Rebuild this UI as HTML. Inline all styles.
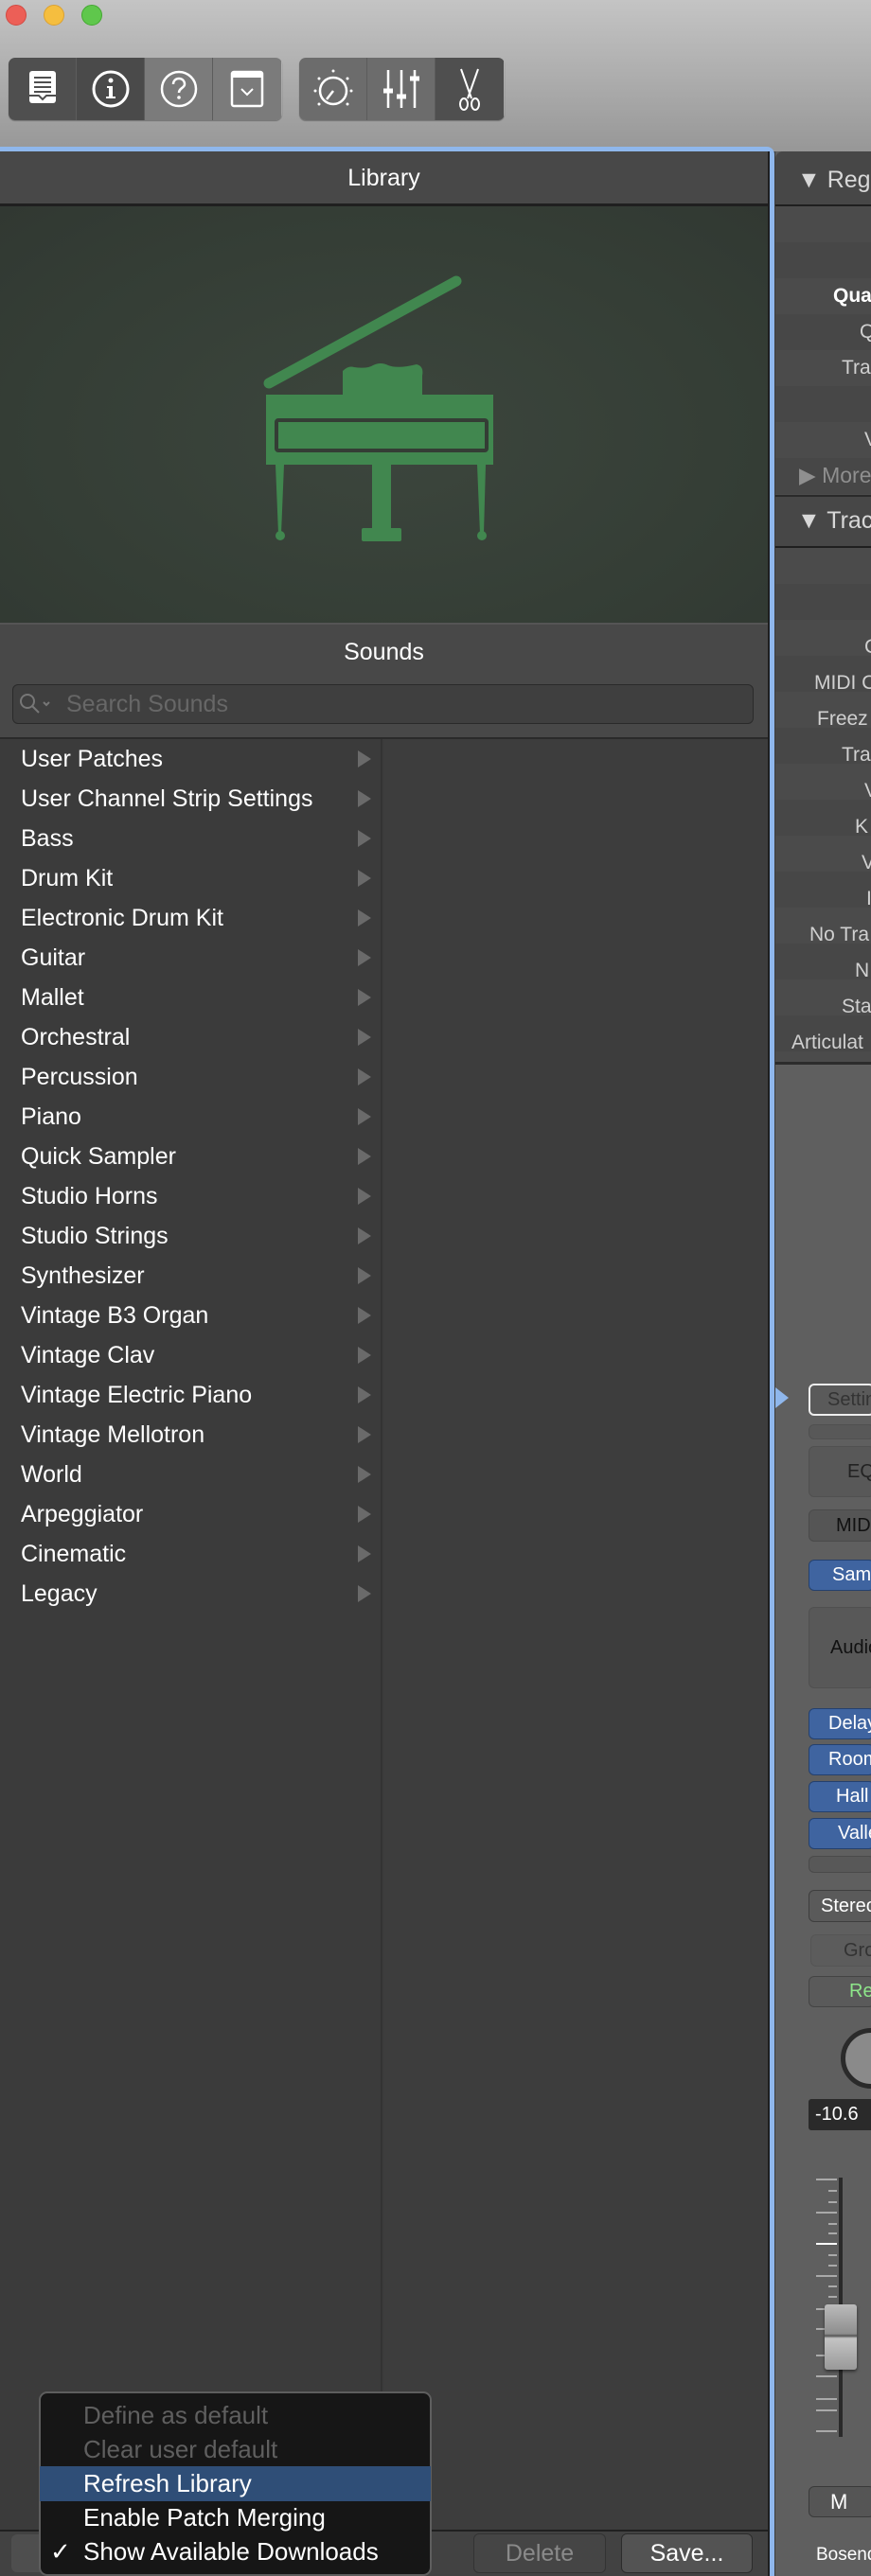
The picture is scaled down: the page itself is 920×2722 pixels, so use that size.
<!DOCTYPE html>
<html><head><meta charset="utf-8"><style>
*{margin:0;padding:0;box-sizing:border-box}
body{width:920px;height:2722px;overflow:hidden;position:relative;background:#3c3c3c;font-family:"Liberation Sans",sans-serif}
.a{position:absolute}
.top{left:0;top:0;width:920px;height:160px;background:linear-gradient(#c4c4c4,#a9a9a9 60%,#979797)}
.tl{width:22px;height:22px;border-radius:50%;top:5px}
.tb{top:61px;height:66px;border-radius:7px;overflow:hidden;display:flex;box-shadow:0 1px 1px rgba(0,0,0,.3)}
.tb div{width:72px;height:66px;border-right:1px solid #5c5c5c;display:flex;align-items:center;justify-content:center}
.row{left:0;width:404px;height:42px;color:#fff;font-size:25px;line-height:42px;padding-left:22px}
.arr{left:378px;width:0;height:0;border-top:9px solid transparent;border-bottom:9px solid transparent;border-left:14px solid #6a6a6a}
.rr{left:819px;width:101px;height:38px;color:#d0d0d0;font-size:21px;line-height:38px;white-space:nowrap;overflow:hidden}
.btn{left:854px;width:70px;border-radius:6px;font-size:20px;text-align:left;padding-left:18px;white-space:nowrap;overflow:hidden}
.blue{background:#3f64a0;border:1px solid #24406e;color:#fff}
.mi{left:42px;width:413px;height:36px;font-size:26px;line-height:36px;padding-left:46px;color:#fff}
</style></head><body>
<div class="a top"></div>
<div class="a tl" style="left:6px;background:#ec5f57;border:1px solid #d24a42"></div>
<div class="a tl" style="left:46px;background:#f5be3f;border:1px solid #dba130"></div>
<div class="a tl" style="left:86px;background:#5fc74c;border:1px solid #44a832"></div>

<div class="a tb" style="left:9px;width:289px">
 <div style="background:#4f4f4f"><svg width="40" height="46" viewBox="0 0 40 46"><rect x="6" y="4" width="28" height="34" rx="3" fill="#fff"/><g stroke="#4f4f4f" stroke-width="2"><line x1="11" y1="11" x2="29" y2="11"/><line x1="11" y1="16" x2="29" y2="16"/><line x1="11" y1="21" x2="29" y2="21"/><line x1="11" y1="26" x2="29" y2="26"/></g><path d="M6 30h10l4 4 4-4h10" stroke="#4f4f4f" stroke-width="2" fill="none"/></svg></div>
 <div style="background:#4a4a4a"><svg width="44" height="44"><circle cx="22" cy="22" r="18" fill="none" stroke="#fff" stroke-width="3"/><circle cx="22" cy="13" r="2.5" fill="#fff"/><path d="M18 19h6v11h3v2h-10v-2h3v-9h-2z" fill="#fff"/></svg></div>
 <div style="background:#7b7b7b"><svg width="44" height="44"><circle cx="22" cy="22" r="18" fill="none" stroke="#fff" stroke-width="2.5"/><path d="M16 17c0-4 3-6 6-6s6 2 6 6c0 4-6 4-6 9" fill="none" stroke="#fff" stroke-width="2.5"/><circle cx="22" cy="31" r="1.8" fill="#fff"/></svg></div>
 <div style="background:#7b7b7b;border:none"><svg width="40" height="44"><rect x="4" y="4" width="32" height="36" rx="2" fill="none" stroke="#fff" stroke-width="2.5"/><rect x="4" y="4" width="32" height="6" fill="#fff"/><path d="M14 22l6 6 6-6" fill="none" stroke="#fff" stroke-width="2"/></svg></div>
</div>
<div class="a tb" style="left:316px;width:217px">
 <div style="background:#6c6c6c"><svg width="44" height="48"><circle cx="22" cy="26" r="14" fill="none" stroke="#fff" stroke-width="2.5"/><line x1="22" y1="26" x2="15" y2="35" stroke="#fff" stroke-width="2.5"/><g fill="#fff"><circle cx="22" cy="5" r="1.5"/><circle cx="7" cy="13" r="1.5"/><circle cx="37" cy="13" r="1.5"/><circle cx="3" cy="26" r="1.5"/><circle cx="41" cy="26" r="1.5"/><circle cx="7" cy="40" r="1.5"/><circle cx="37" cy="40" r="1.5"/></g></svg></div>
 <div style="background:#6c6c6c"><svg width="44" height="48" stroke="#fff" stroke-width="2.5"><line x1="8" y1="4" x2="8" y2="44"/><line x1="22" y1="4" x2="22" y2="44"/><line x1="36" y1="4" x2="36" y2="44"/><g stroke-width="5"><line x1="3" y1="26" x2="13" y2="26"/><line x1="17" y1="32" x2="27" y2="32"/><line x1="31" y1="13" x2="41" y2="13"/></g></svg></div>
 <div style="background:#4f4f4f;border:none"><svg width="30" height="48" fill="none" stroke="#fff" stroke-width="2"><line x1="6" y1="3" x2="17" y2="34"/><line x1="24" y1="3" x2="13" y2="34"/><ellipse cx="9" cy="40" rx="4" ry="6"/><ellipse cx="21" cy="40" rx="4" ry="6"/></svg></div>
</div>

<!-- library panel -->
<div class="a" style="left:0;top:155px;width:818px;height:2567px;border-top:5px solid #8fb7ec;border-right:5px solid #8fb7ec;border-top-right-radius:8px;background:#3b3b3b"></div>
<div class="a" style="left:0;top:160px;width:813px;height:2562px;background:#3c3c3c;border-right:2px solid #1e1e1e"></div>
<div class="a" style="left:0;top:160px;width:811px;height:58px;background:#484848;border-bottom:3px solid #1f1f1f;color:#fff;font-size:25px;text-align:center;line-height:56px">Library</div>
<div class="a" style="left:0;top:218px;width:811px;height:440px;background:radial-gradient(ellipse at 50% 55%,#3c463d,#343d35 70%,#313832)">
<svg class="a" style="left:0;top:-218px" width="811" height="700">
 <g fill="#41874f">
 <line x1="284" y1="405" x2="482" y2="297" stroke="#41874f" stroke-width="11" stroke-linecap="round"/>
 <path d="M362 392q6-6 12-4q14 2 20-2q8-4 16 0q10 4 30-1q8 2 6 12v20h-84v-20z"/>
 <rect x="281" y="417" width="240" height="74"/>
 <path d="M291 491h9l-3 73h-3z"/><circle cx="296" cy="566" r="5"/>
 <path d="M504 491h9l-2 73h-4z"/><circle cx="509" cy="566" r="5"/>
 <rect x="393" y="491" width="20" height="70"/><rect x="382" y="558" width="42" height="14" rx="2"/>
 </g>
 <rect x="292" y="444" width="222" height="32" rx="2" fill="none" stroke="#343d35" stroke-width="4"/>
 <rect x="301" y="455" width="204" height="12" rx="3" fill="#41874f"/>
</svg></div>
<div class="a" style="left:0;top:658px;width:811px;height:123px;background:#484848;border-top:2px solid #555;border-bottom:2px solid #2a2a2a"></div>
<div class="a" style="left:0;top:675px;width:811px;text-align:center;color:#fff;font-size:25px">Sounds</div>
<div class="a" style="left:13px;top:723px;width:783px;height:42px;border:1px solid #2a2a2a;border-radius:6px;background:#3f3f3f;color:#676767;font-size:25px;line-height:40px;padding-left:56px">Search Sounds</div>
<svg class="a" style="left:18px;top:731px" width="40" height="26" fill="none" stroke="#777" stroke-width="2"><circle cx="11" cy="10" r="7"/><line x1="16" y1="15" x2="23" y2="22"/><path d="M28 11l3 3 3-3"/></svg>
<div class="a" style="left:0;top:781px;width:404px;height:1892px;background:#3b3b3b;border-right:2px solid #333"></div>
<div class="a" style="left:406px;top:781px;width:405px;height:1892px;background:#3d3d3d"></div>

<div class="a row" style="top:781px">User Patches</div><div class="a arr" style="top:793px"></div>
<div class="a row" style="top:823px">User Channel Strip Settings</div><div class="a arr" style="top:835px"></div>
<div class="a row" style="top:865px">Bass</div><div class="a arr" style="top:877px"></div>
<div class="a row" style="top:907px">Drum Kit</div><div class="a arr" style="top:919px"></div>
<div class="a row" style="top:949px">Electronic Drum Kit</div><div class="a arr" style="top:961px"></div>
<div class="a row" style="top:991px">Guitar</div><div class="a arr" style="top:1003px"></div>
<div class="a row" style="top:1033px">Mallet</div><div class="a arr" style="top:1045px"></div>
<div class="a row" style="top:1075px">Orchestral</div><div class="a arr" style="top:1087px"></div>
<div class="a row" style="top:1117px">Percussion</div><div class="a arr" style="top:1129px"></div>
<div class="a row" style="top:1159px">Piano</div><div class="a arr" style="top:1171px"></div>
<div class="a row" style="top:1201px">Quick Sampler</div><div class="a arr" style="top:1213px"></div>
<div class="a row" style="top:1243px">Studio Horns</div><div class="a arr" style="top:1255px"></div>
<div class="a row" style="top:1285px">Studio Strings</div><div class="a arr" style="top:1297px"></div>
<div class="a row" style="top:1327px">Synthesizer</div><div class="a arr" style="top:1339px"></div>
<div class="a row" style="top:1369px">Vintage B3 Organ</div><div class="a arr" style="top:1381px"></div>
<div class="a row" style="top:1411px">Vintage Clav</div><div class="a arr" style="top:1423px"></div>
<div class="a row" style="top:1453px">Vintage Electric Piano</div><div class="a arr" style="top:1465px"></div>
<div class="a row" style="top:1495px">Vintage Mellotron</div><div class="a arr" style="top:1507px"></div>
<div class="a row" style="top:1537px">World</div><div class="a arr" style="top:1549px"></div>
<div class="a row" style="top:1579px">Arpeggiator</div><div class="a arr" style="top:1591px"></div>
<div class="a row" style="top:1621px">Cinematic</div><div class="a arr" style="top:1633px"></div>
<div class="a row" style="top:1663px">Legacy</div><div class="a arr" style="top:1675px"></div>

<!-- bottom bar -->
<div class="a" style="left:0;top:2673px;width:811px;height:49px;background:#424242;border-top:2px solid #202020"></div>
<div class="a" style="left:12px;top:2678px;width:50px;height:40px;border-radius:6px;background:#4e4e4e"></div>
<div class="a" style="left:500px;top:2677px;width:140px;height:42px;border-radius:6px;background:#454545;border:1px solid #333;color:#8a8a8a;font-size:25px;text-align:center;line-height:40px">Delete</div>
<div class="a" style="left:656px;top:2677px;width:139px;height:42px;border-radius:6px;background:#535353;border:1px solid #2c2c2c;color:#fff;font-size:25px;text-align:center;line-height:40px">Save...</div>

<!-- popup menu -->
<div class="a" style="left:41px;top:2527px;width:415px;height:195px;background:#161616;border:2px solid #5e5e5e;border-radius:9px"></div>
<div class="a mi" style="top:2534px;color:#5f5f5f">Define as default</div>
<div class="a mi" style="top:2570px;color:#5f5f5f">Clear user default</div>
<div class="a mi" style="top:2606px;background:#2f4e77;height:37px">Refresh Library</div>
<div class="a mi" style="top:2642px">Enable Patch Merging</div>
<div class="a mi" style="top:2678px">Show Available Downloads</div>
<div class="a" style="left:53px;top:2678px;color:#fff;font-size:26px;line-height:36px">✓</div>

<!-- right inspector -->
<div class="a" style="left:819px;top:160px;width:101px;height:2562px;background:#5f5f5f"></div>
<div class="a" style="left:819px;top:160px;width:101px;height:58px;background:#474747;border-bottom:2px solid #1f1f1f;border-top-left-radius:8px"></div>
<div class="a" style="left:842px;top:176px;color:#d8d8d8;font-size:25px;white-space:nowrap">▼ Regi</div>
<div class="a" style="left:819px;top:218px;width:101px;height:305px;background:repeating-linear-gradient(#4b4b4b 0 38px,#474747 38px 76px)"></div>
<div class="a rr" style="top:294px;left:880px;color:#fff;font-weight:bold">Qua</div>
<div class="a rr" style="top:332px;left:908px">Q</div>
<div class="a rr" style="top:370px;left:889px">Tra</div>
<div class="a rr" style="top:446px;left:913px">V</div>
<div class="a rr" style="top:483px;left:844px;color:#8f8f8f;font-size:23px">▶ More</div>
<div class="a" style="left:819px;top:523px;width:101px;height:56px;background:#474747;border-top:2px solid #2a2a2a;border-bottom:2px solid #1f1f1f"></div>
<div class="a" style="left:842px;top:536px;color:#d8d8d8;font-size:25px;white-space:nowrap">▼ Trac</div>
<div class="a" style="left:819px;top:579px;width:101px;height:545px;background:repeating-linear-gradient(#4b4b4b 0 38px,#474747 38px 76px)"></div>
<div class="a rr" style="top:665px;left:913px">C</div>
<div class="a rr" style="top:703px;left:860px">MIDI C</div>
<div class="a rr" style="top:741px;left:863px">Freez</div>
<div class="a rr" style="top:779px;left:889px">Tra</div>
<div class="a rr" style="top:817px;left:913px">V</div>
<div class="a rr" style="top:855px;left:903px">K</div>
<div class="a rr" style="top:893px;left:910px">V</div>
<div class="a rr" style="top:931px;left:915px">I</div>
<div class="a rr" style="top:969px;left:855px">No Tra</div>
<div class="a rr" style="top:1007px;left:903px">N</div>
<div class="a rr" style="top:1045px;left:889px">Sta</div>
<div class="a rr" style="top:1083px;left:836px">Articulat</div>
<div class="a" style="left:819px;top:1122px;width:101px;height:3px;background:#2c2c2c"></div>

<!-- channel strip -->
<div class="a" style="left:819px;top:1466px;width:0;height:0;border-top:11px solid transparent;border-bottom:11px solid transparent;border-left:14px solid #8fb7ec"></div>
<div class="a btn" style="top:1462px;height:34px;border:2px solid #eee;background:#5a5a5a;color:#333;line-height:30px">Setting</div>
<div class="a btn" style="top:1505px;height:16px;background:#585858;border:1px solid #505050"></div>
<div class="a btn" style="top:1528px;height:54px;background:#585858;border:1px solid #505050;color:#222;line-height:52px;padding-left:40px">EQ</div>
<div class="a btn" style="top:1595px;height:34px;background:#555;border:1px solid #4a4a4a;color:#111;line-height:32px;padding-left:28px">MIDI</div>
<div class="a btn blue" style="top:1648px;height:33px;line-height:31px;padding-left:24px">Sampler</div>
<div class="a btn" style="top:1698px;height:86px;background:#585858;border:1px solid #505050;color:#111;line-height:84px;padding-left:22px">Audio</div>
<div class="a btn blue" style="top:1805px;height:33px;line-height:31px;padding-left:20px">Delay</div>
<div class="a btn blue" style="top:1843px;height:33px;line-height:31px;padding-left:20px">Room</div>
<div class="a btn blue" style="top:1882px;height:33px;line-height:31px;padding-left:28px">Hall</div>
<div class="a btn blue" style="top:1921px;height:33px;line-height:31px;padding-left:30px">Valley</div>
<div class="a btn" style="top:1961px;height:18px;background:#585858;border:1px solid #4a4a4a"></div>
<div class="a btn" style="top:1997px;height:34px;background:#5a5a5a;border:1px solid #3e3e3e;color:#fff;line-height:32px;padding-left:12px">Stereo</div>
<div class="a btn" style="top:2044px;height:34px;left:856px;background:#5c5c5c;border:1px solid #555;color:#333;line-height:32px;padding-left:34px">Group</div>
<div class="a btn" style="top:2088px;height:33px;background:#5a5a5a;border:1px solid #444;color:#8ee68a;line-height:31px;padding-left:42px">Read</div>
<div class="a" style="left:888px;top:2143px;width:64px;height:64px;border-radius:50%;border:5px solid #2a2a2a;background:#8a8a8a"></div>
<div class="a" style="left:854px;top:2218px;width:70px;height:33px;background:#2a2a2a;border-radius:3px;color:#fff;font-size:20px;line-height:33px;padding-left:7px">-10.6</div>
<div class="a" style="left:886px;top:2301px;width:4px;height:274px;background:#2a2a2a"></div>
<svg class="a" style="left:860px;top:2297px" width="25" height="280" stroke="#a9a9a9" stroke-width="2">
<line x1="2" y1="6" x2="24" y2="6"/><line x1="15" y1="18" x2="24" y2="18"/><line x1="15" y1="30" x2="24" y2="30"/><line x1="2" y1="41" x2="24" y2="41"/><line x1="15" y1="53" x2="24" y2="53"/><line x1="15" y1="63" x2="24" y2="63"/><line x1="2" y1="74" x2="24" y2="74" stroke="#fff"/><line x1="15" y1="86" x2="24" y2="86"/><line x1="15" y1="97" x2="24" y2="97"/><line x1="2" y1="108" x2="24" y2="108"/><line x1="15" y1="119" x2="24" y2="119"/><line x1="15" y1="130" x2="24" y2="130"/><line x1="2" y1="143" x2="24" y2="143"/><line x1="2" y1="164" x2="24" y2="164"/><line x1="2" y1="192" x2="24" y2="192"/><line x1="15" y1="203" x2="24" y2="203"/><line x1="2" y1="214" x2="24" y2="214"/><line x1="2" y1="238" x2="24" y2="238"/><line x1="2" y1="250" x2="24" y2="250"/><line x1="2" y1="272" x2="24" y2="272"/></svg>
<div class="a" style="left:871px;top:2435px;width:34px;height:69px;border-radius:3px;background:linear-gradient(#bbb,#8e8e8e 45%,#555 48%,#c4c4c4 52%,#999);box-shadow:0 2px 3px rgba(0,0,0,.5)"></div>
<div class="a btn" style="top:2627px;height:33px;background:#555;border:1px solid #3a3a3a;color:#fff;line-height:31px;padding-left:22px;font-size:22px">M</div>
<div class="a" style="left:862px;top:2689px;color:#fff;font-size:19px;white-space:nowrap">Bosendorfer</div>
</body></html>
